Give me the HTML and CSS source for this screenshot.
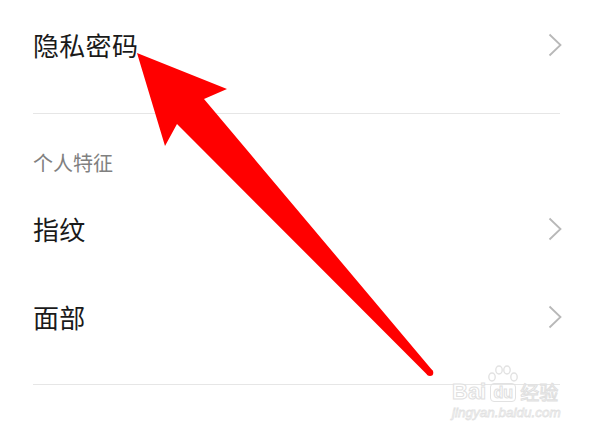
FILE: index.html
```html
<!DOCTYPE html>
<html lang="zh-CN">
<head>
<meta charset="utf-8">
<title>隐私</title>
<link rel="stylesheet" href="styles.css">
</head>
<body>
<div class="page">
  <div class="row row-first">
    <span class="label">隐私密码</span>
    <svg class="chev" width="14" height="24" viewBox="0 0 14 24"><polyline points="1.5,1.5 12.5,12 1.5,22.5" fill="none" stroke="#b8b8b8" stroke-width="1.8"/></svg>
  </div>
  <div class="divider divider-first"></div>
  <div class="section">个人特征</div>
  <div class="row">
    <span class="label">指纹</span>
    <svg class="chev" width="14" height="24" viewBox="0 0 14 24"><polyline points="1.5,1.5 12.5,12 1.5,22.5" fill="none" stroke="#b8b8b8" stroke-width="1.8"/></svg>
  </div>
  <div class="row">
    <span class="label">面部</span>
    <svg class="chev" width="14" height="24" viewBox="0 0 14 24"><polyline points="1.5,1.5 12.5,12 1.5,22.5" fill="none" stroke="#b8b8b8" stroke-width="1.8"/></svg>
  </div>
  <div class="divider divider-last"></div>

  <svg class="arrow" width="590" height="432" viewBox="0 0 590 432">
    <polygon points="137,53 227,89 204,99 432.5,370.5 427.5,375 177,124 165,146" fill="#ff0000"/>
    <circle cx="430" cy="372.8" r="3.3" fill="#ff0000"/>
  </svg>

  <div class="watermark">
    <div class="wm-top">
      <span class="wm-bai">Bai</span>
      <span class="wm-paw">
        <svg width="34" height="18" viewBox="0 0 34 18">
          <g fill="none" stroke="#e2e2e2" stroke-width="1.4">
            <ellipse cx="6" cy="12" rx="3.2" ry="4"/>
            <ellipse cx="13" cy="5" rx="3.2" ry="4"/>
            <ellipse cx="21" cy="5" rx="3.2" ry="4"/>
            <ellipse cx="28" cy="12" rx="3.2" ry="4"/>
          </g>
        </svg>
        <span class="wm-du">du</span>
      </span>
      <span class="wm-jy">经验</span>
    </div>
    <div class="wm-url">jingyan.baidu.com</div>
  </div>
</div>
</body>
</html>
```
FILE: styles.css
```css
html, body {
  margin: 0;
  padding: 0;
  background: #ffffff;
}

body {
  font-family: "Noto Sans CJK SC", "Noto Sans", sans-serif;
  color: #1a1a1a;
}

.page {
  position: relative;
  width: 590px;
  height: 432px;
  overflow: hidden;
  padding: 0 30px 0 33px;
  box-sizing: border-box;
}

.row {
  height: 88px;
  display: flex;
  align-items: center;
  justify-content: space-between;
}

.row-first {
  margin-top: 1px;
}

.label {
  font-size: 26px;
  line-height: 36px;
  letter-spacing: 0.3px;
}

.chev {
  display: block;
  margin-right: -2px;
}

.divider {
  height: 1px;
  background: #e6e6e6;
}

.divider-first {
  margin-top: 24px;
}

.divider-last {
  margin-top: 23px;
}

.section {
  font-size: 20px;
  line-height: 28px;
  color: #808080;
  padding-top: 35px;
  padding-bottom: 8px;
}

.arrow {
  position: absolute;
  left: 0;
  top: 0;
  pointer-events: none;
}

.watermark {
  position: absolute;
  left: 452px;
  top: 366px;
  width: 110px;
  font-family: "Liberation Sans", sans-serif;
}

.wm-top {
  display: flex;
  align-items: flex-end;
  height: 36px;
}

.wm-bai {
  font-size: 22px;
  line-height: 20px;
  font-weight: bold;
  color: #ffffff;
  -webkit-text-stroke: 1px #e0e0e0;
}

.wm-paw {
  display: flex;
  flex-direction: column;
  align-items: center;
  width: 34px;
}

.wm-du {
  font-size: 16px;
  line-height: 17px;
  font-weight: bold;
  color: #ffffff;
  -webkit-text-stroke: 1px #e0e0e0;
  border: 1px solid #e2e2e2;
  border-radius: 4px;
  padding: 0 2px;
}

.wm-jy {
  font-family: "Noto Sans CJK SC", sans-serif;
  font-size: 19px;
  line-height: 20px;
  color: #ffffff;
  -webkit-text-stroke: 1px #e0e0e0;
}

.wm-url {
  font-size: 13.5px;
  line-height: 16px;
  margin-top: 3px;
  color: #ffffff;
  -webkit-text-stroke: 0.8px #e2e2e2;
  font-style: italic;
}
```
